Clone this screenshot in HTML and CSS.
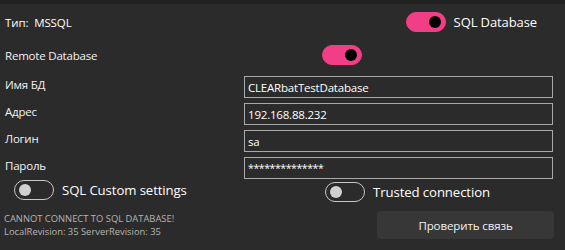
FILE: index.html
```html
<!DOCTYPE html>
<html lang="ru">

<head>
    <meta charset="UTF-8">
    <meta name="viewport" content="width=device-width, initial-scale=1.0">
    <title>SQL Settings</title>
    <link rel="stylesheet" href="styles.css">
</head>

<body>
    <div class="top-strip"></div>

    <div class="panel">
        <!-- Header -->
        <div class="row-head">
            <div class="db-type">Тип:&nbsp; MSSQL</div>
            <label class="switch-line">
                <span class="switch on"><span class="knob"></span></span>
                <span class="switch-text">SQL Database</span>
            </label>
        </div>

        <div class="row-remote">
            <div class="label remote">Remote Database</div>
            <span class="switch on"><span class="knob"></span></span>
        </div>

        <!-- Connection fields -->
        <div class="fields">
            <div class="label">Имя БД</div>
            <input class="field" type="text" value="CLEARbatTestDatabase">
            <div class="label">Адрес</div>
            <input class="field" type="text" value="192.168.88.232">
            <div class="label">Логин</div>
            <input class="field" type="text" value="sa">
            <div class="label">Пароль</div>
            <input class="field pass" type="text" value="**************">
        </div>

        <!-- Options -->
        <div class="row-options">
            <label class="switch-line custom">
                <span class="switch"><span class="knob"></span></span>
                <span class="switch-text">SQL Custom settings</span>
            </label>
            <label class="switch-line trusted">
                <span class="switch"><span class="knob"></span></span>
                <span class="switch-text">Trusted connection</span>
            </label>
        </div>

        <!-- Status -->
        <div class="row-status">
            <div class="status">
                <div>CANNOT CONNECT TO SQL DATABASE!</div>
                <div>LocalRevision: 35 ServerRevision: 35</div>
            </div>
            <button class="btn-check">Проверить связь</button>
        </div>
    </div>
</body>

</html>
```

FILE: styles.css
```css
/* General Styling */
body {
    font-family: 'Open Sans', 'Noto Sans', sans-serif;
    background-color: #2b2b2b;
    color: #ffffff;
    margin: 0;
    padding: 0;
    width: 565px;
    height: 250px;
    overflow: hidden;
}

.top-strip {
    height: 4px;
    background-color: #202020;
}

.panel {
    padding: 0 12px 0 5px;
}

.label {
    font-size: 11.5px;
    letter-spacing: -0.2px;
    color: #f2f2f2;
}

/* Toggle switch */
.switch {
    display: flex;
    align-items: center;
    box-sizing: border-box;
    width: 40px;
    height: 20px;
    border-radius: 10px;
    border: 1px solid #c8c8c8;
    padding: 0 4px;
    flex-shrink: 0;
}

.switch .knob {
    width: 12px;
    height: 12px;
    border-radius: 50%;
    background-color: #d0d0d0;
}

.switch.on {
    background-color: #f23d87;
    border-color: #f23d87;
    justify-content: flex-end;
}

.switch.on .knob {
    background-color: #000;
}

.switch-line {
    display: flex;
    align-items: center;
    gap: 8px;
}

.switch-text {
    font-size: 13.2px;
    letter-spacing: -0.1px;
}

/* Header rows */
.row-head {
    display: flex;
    justify-content: space-between;
    align-items: center;
    height: 36px;
}

.db-type {
    font-size: 11.5px;
    letter-spacing: -0.1px;
}

.row-head .switch-line {
    margin-right: 16px;
}

.row-head .switch-text {
    font-size: 13px;
}

.row-remote {
    display: flex;
    align-items: center;
    height: 30px;
}

.row-remote .remote {
    width: 317px;
}

/* Fields */
.fields {
    display: grid;
    grid-template-columns: 239px 309px;
    row-gap: 5px;
    margin-top: 6px;
}

.fields .label {
    padding-top: 1px;
}

.field {
    box-sizing: border-box;
    height: 22px;
    width: 309px;
    background-color: transparent;
    border: 1px solid #a9a9a9;
    color: #fff;
    font-family: inherit;
    font-size: 11.5px;
    letter-spacing: -0.2px;
    padding: 0 3px;
    margin: 0;
    outline: none;
}

.field.pass {
    font-size: 10.5px;
    letter-spacing: -0.4px;
}

/* Options */
.row-options {
    display: flex;
    align-items: center;
    height: 26px;
    margin-top: -2px;
    padding-left: 9px;
}

.row-options .custom {
    width: 311px;
}

.row-options .trusted {
    margin-top: 3px;
}

/* Status */
.row-status {
    display: flex;
    justify-content: space-between;
    align-items: flex-start;
    margin-top: 8px;
}

.status {
    font-size: 9.4px;
    color: #b4b4b4;
    line-height: 13px;
    padding-top: 1px;
    margin-left: -1px;
}

.btn-check {
    width: 177px;
    height: 28px;
    margin-right: -1px;
    border: none;
    border-radius: 4px;
    background-color: #373737;
    color: #f2f2f2;
    font-family: inherit;
    font-size: 11.5px;
    letter-spacing: -0.1px;
}
```
